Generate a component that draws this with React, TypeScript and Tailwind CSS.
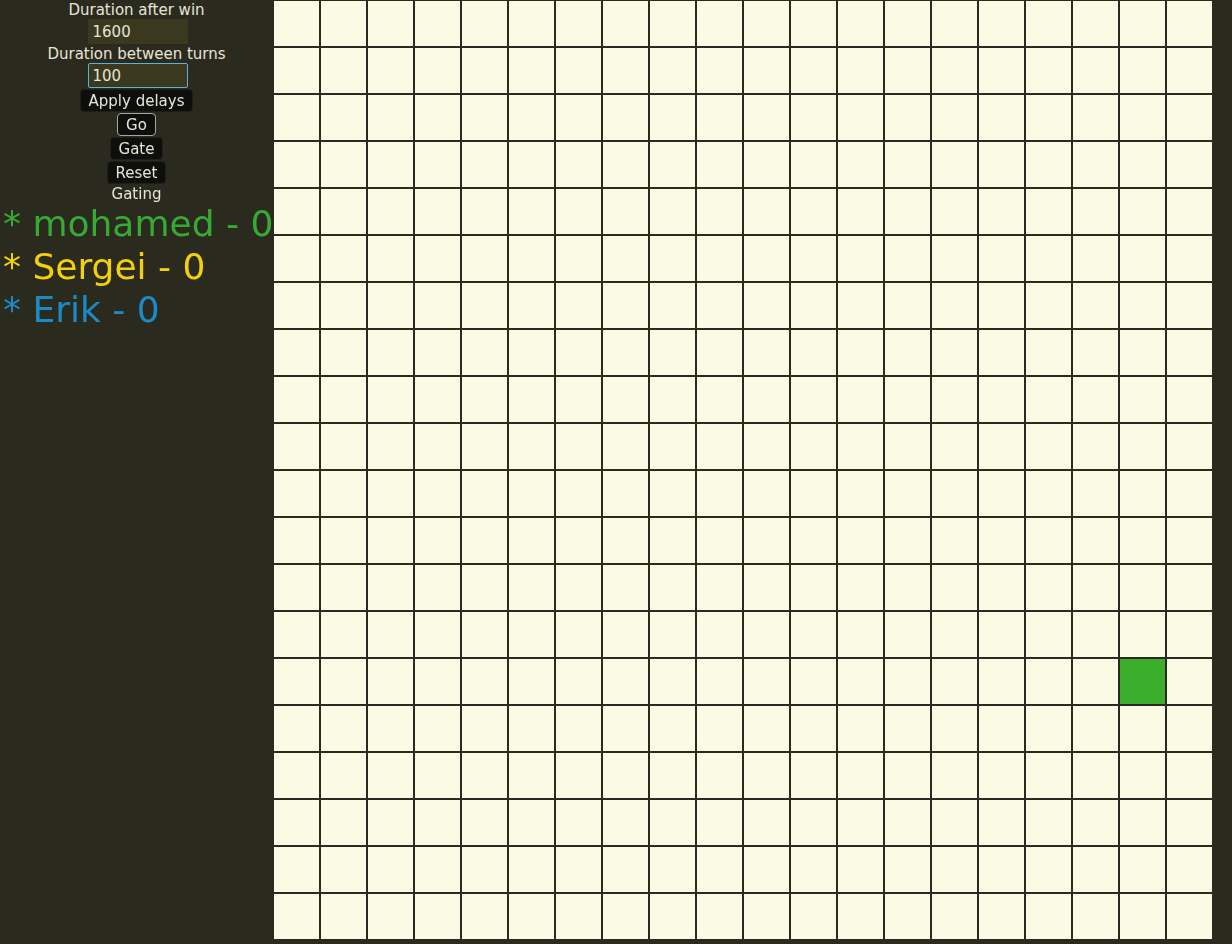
import React, { useState } from 'react';

const ROWS = 20;
const COLS = 20;

interface Player {
  name: string;
  score: number;
  color: string;
}

const players: Player[] = [
  { name: 'mohamed', score: 0, color: 'text-[#36aa34]' },
  { name: 'Sergei', score: 0, color: 'text-[#f2d00a]' },
  { name: 'Erik', score: 0, color: 'text-[#1b8bc6]' },
];

const filled: Record<string, string> = {
  '14-18': 'bg-[#3bae2b]',
};

const App: React.FC = () => {
  const [afterWin, setAfterWin] = useState('1600');
  const [between, setBetween] = useState('100');

  return (
    <div className="flex min-h-[944px] w-full bg-[#2b2a1e] font-['DejaVu_Sans',sans-serif] text-[#e7e5d5]">
      {/* Controls */}
      <div className="w-[273px] shrink-0 text-[15px] leading-[18px]">
        <div className="flex flex-col items-center">
          <div className="h-[19px] pt-px">Duration after win</div>
          <input
            value={afterWin}
            onChange={(e) => setAfterWin(e.target.value)}
            className="ml-[2px] h-[25px] w-[100px] border border-transparent bg-[#3a381f] px-1 text-[15px] text-[#e7e5d5] outline-none"
          />
          <div className="h-[19px] pt-px">Duration between turns</div>
          <input
            value={between}
            onChange={(e) => setBetween(e.target.value)}
            autoFocus
            className="ml-[2px] h-[25px] w-[100px] rounded-[2px] border border-[#5fb2d6] bg-[#3a381f] px-1 text-[15px] text-[#e7e5d5] outline-none"
          />
          <button className="mt-px h-[23px] rounded-[4px] border border-[#1e1e1a] bg-[#0e0e0c] px-2 leading-[18px]">
            Apply delays
          </button>
          <button className="mt-px h-[23px] rounded-[4px] border border-[#a9a898] bg-[#0e0e0c] px-2 leading-[18px]">
            Go
          </button>
          <button className="mt-px h-[23px] rounded-[4px] border border-[#1e1e1a] bg-[#0e0e0c] px-2 leading-[18px]">
            Gate
          </button>
          <button className="mt-px h-[23px] rounded-[4px] border border-[#1e1e1a] bg-[#0e0e0c] px-2 leading-[18px]">
            Reset
          </button>
          <div className="h-[19px] pt-px">Gating</div>
        </div>

        {/* Scores */}
        <ul className="-mt-px pl-[3px] text-[36px] leading-[43px] whitespace-nowrap">
          {players.map((p) => (
            <li key={p.name} className={p.color}>
              * {p.name} - {p.score}
            </li>
          ))}
        </ul>
      </div>

      {/* Board */}
      <div className="self-start">
        <div className="grid grid-cols-[repeat(20,47px)]">
          {Array.from({ length: ROWS * COLS }).map((_, i) => {
            const r = Math.floor(i / COLS);
            const c = i % COLS;
            const bg = filled[`${r}-${c}`] ?? 'bg-[#fbfae4]';
            return <div key={i} className={`h-[47px] w-[47px] border border-[#2b2a22] ${bg}`} />;
          })}
        </div>
      </div>
    </div>
  );
};

export default App;
